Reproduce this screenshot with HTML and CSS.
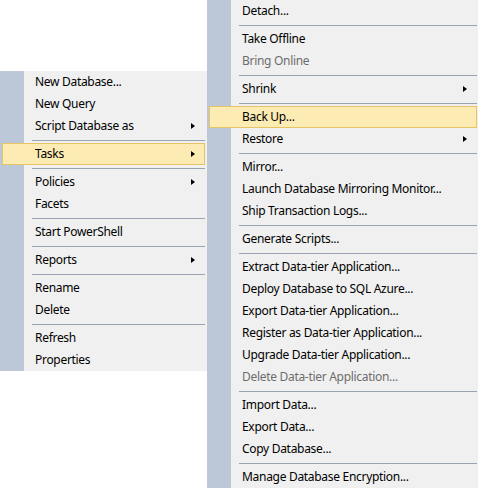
FILE: index.html
```html
<!DOCTYPE html>
<html>
<head>
<meta charset="utf-8">
<link rel="stylesheet" href="styles.css">
</head>
<body>
<div class="screen">
  <div class="menu menu-left">
    <div class="item">New Database...</div>
    <div class="item">New Query</div>
    <div class="item sub">Script Database as<span class="arrow"></span></div>
    <div class="sep"></div>
    <div class="item sub hot">Tasks<span class="arrow"></span></div>
    <div class="sep"></div>
    <div class="item sub">Policies<span class="arrow"></span></div>
    <div class="item">Facets</div>
    <div class="sep"></div>
    <div class="item">Start PowerShell</div>
    <div class="sep"></div>
    <div class="item sub">Reports<span class="arrow"></span></div>
    <div class="sep"></div>
    <div class="item">Rename</div>
    <div class="item">Delete</div>
    <div class="sep"></div>
    <div class="item">Refresh</div>
    <div class="item">Properties</div>
  </div>
  <div class="menu menu-right">
    <div class="item">Detach...</div>
    <div class="sep"></div>
    <div class="item">Take Offline</div>
    <div class="item disabled">Bring Online</div>
    <div class="sep"></div>
    <div class="item sub">Shrink<span class="arrow"></span></div>
    <div class="sep"></div>
    <div class="item hot">Back Up...</div>
    <div class="item sub">Restore<span class="arrow"></span></div>
    <div class="sep"></div>
    <div class="item">Mirror...</div>
    <div class="item">Launch Database Mirroring Monitor...</div>
    <div class="item">Ship Transaction Logs...</div>
    <div class="sep"></div>
    <div class="item">Generate Scripts...</div>
    <div class="sep"></div>
    <div class="item">Extract Data-tier Application...</div>
    <div class="item">Deploy Database to SQL Azure...</div>
    <div class="item">Export Data-tier Application...</div>
    <div class="item">Register as Data-tier Application...</div>
    <div class="item">Upgrade Data-tier Application...</div>
    <div class="item disabled">Delete Data-tier Application...</div>
    <div class="sep"></div>
    <div class="item">Import Data...</div>
    <div class="item">Export Data...</div>
    <div class="item">Copy Database...</div>
    <div class="sep"></div>
    <div class="item">Manage Database Encryption...</div>
  </div>
</div>
</body>
</html>
```
FILE: styles.css
```css
html, body {
  margin: 0;
  padding: 0;
  background: #ffffff;
}
.screen {
  width: 478px;
  height: 488px;
  overflow: hidden;
  display: flex;
  align-items: flex-start;
  font-family: "Noto Sans", "Open Sans", sans-serif;
  font-size: 12px;
  letter-spacing: -0.3px;
  color: #000000;
}
.menu {
  display: flex;
  flex-direction: column;
  flex-shrink: 0;
  background: linear-gradient(to right, #bcc7d8 24px, #f0f0f0 24px);
}
.menu-left {
  width: 207px;
  margin-top: 71px;
}
.menu-right {
  width: 272px;
}
.item {
  height: 20px;
  margin: 0 2px;
  border: 1px solid transparent;
  padding: 0 9px 0 32px;
  display: flex;
  align-items: center;
  justify-content: space-between;
  white-space: nowrap;
  line-height: 20px;
}
.item.hot {
  background: #fdebb4;
  border-color: #e6c465;
}
.item.disabled {
  color: #6d6d6d;
}
.arrow {
  width: 0;
  height: 0;
  border-left: 4px solid #000000;
  border-top: 3.5px solid transparent;
  border-bottom: 3.5px solid transparent;
}
.sep {
  height: 1px;
  margin: 3px 2px 2px 32px;
  background: #9aa3b3;
}
```
